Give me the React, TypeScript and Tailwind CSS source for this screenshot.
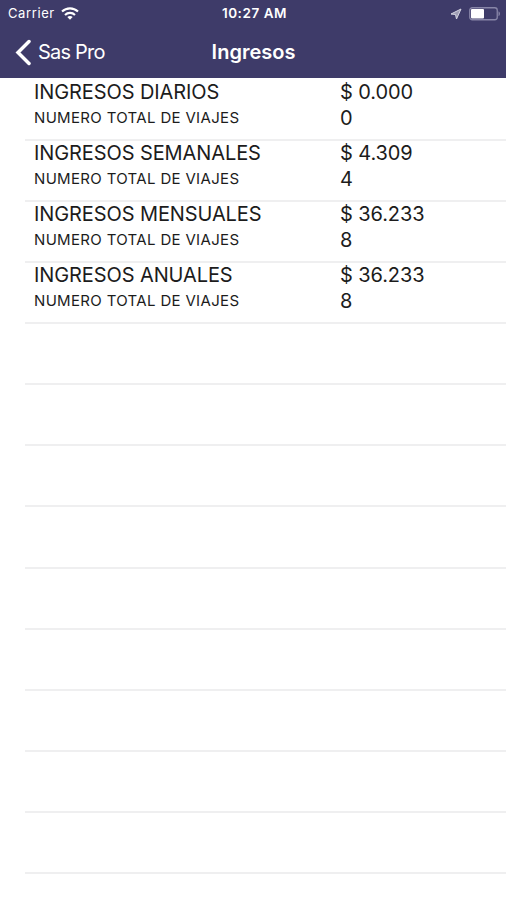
const font = "font-['Inter','Liberation_Sans',sans-serif]"

interface Income {
  label: string;
  amount: string;
  trips: number;
}

const incomes: Income[] = [
  { label: "INGRESOS DIARIOS", amount: "$ 0.000", trips: 0 },
  { label: "INGRESOS SEMANALES", amount: "$ 4.309", trips: 4 },
  { label: "INGRESOS MENSUALES", amount: "$ 36.233", trips: 8 },
  { label: "INGRESOS ANUALES", amount: "$ 36.233", trips: 8 },
]

function StatusBar() {
  return (
    <div className="grid h-[27px] grid-cols-3 items-center pl-2 pr-[5px] text-[13px]">
      <div className="flex items-center gap-[6px]">
        <span className="tracking-[0.6px]">Carrier</span>
        <svg width="18" height="13" viewBox="0 0 18 13" fill="none" stroke="currentColor" strokeWidth="2.1">
          <path d="M1 4.6C5.5.3 12.5.3 17 4.6" />
          <path d="M4 7.9C6.8 5.2 11.2 5.2 14 7.9" />
          <path d="M9 12.8L6.3 10.1C7.8 8.5 10.2 8.5 11.7 10.1Z" fill="currentColor" stroke="none" />
        </svg>
      </div>
      <div className="text-center text-[13.5px] font-semibold tracking-[0.55px] whitespace-nowrap">10:27 AM</div>
      <div className="flex items-center justify-end gap-[7px]">
        <svg width="12" height="12" viewBox="0 0 12 12" fill="none" stroke="#d5d4e2" strokeWidth="1">
          <path d="M11 1L1 6L5.5 6.5L6.5 11Z" fill="currentColor" fillOpacity=".5" />
        </svg>
        <svg width="32" height="14" viewBox="0 0 32 14">
          <rect x=".75" y=".75" width="27.5" height="12" rx="2.5" fill="none" stroke="#8886a8" strokeWidth="1.3" />
          <rect x="2" y="2" width="13" height="9.5" rx="1" fill="white" />
          <path d="M29.5 4.2C31.5 5.2 31.5 8.2 29.5 9.2Z" fill="#8886a8" />
        </svg>
      </div>
    </div>
  )
}

function NavBar() {
  return (
    <div className="grid h-[50px] grid-cols-3 items-center pl-[15px] pr-[14px]">
      <button className="flex items-center gap-[7px] text-xl">
        <svg
          width="16"
          height="27"
          viewBox="0 0 16 27"
          fill="none"
          stroke="currentColor"
          strokeWidth="3.5"
          strokeLinecap="round"
        >
          <path d="M14 2.5L3 13.5L14 24.5" />
        </svg>
        <span className="tracking-[-0.8px] whitespace-nowrap">Sas Pro</span>
      </button>
      <h1 className="text-center text-xl font-semibold">Ingresos</h1>
    </div>
  )
}

export default function App() {
  return (
    <div className={`h-[900px] w-[506px] overflow-hidden bg-white text-[#1c1c1c] ${font}`}>
      <header className="h-[78px] bg-[#3e3b69] text-white">
        <StatusBar />
        <NavBar />
      </header>
      <main className="ml-[25px]">
        {incomes.map((income, i) => (
          <section
            key={income.label}
            className={`grid grid-cols-[306px_1fr] border-b-2 border-[#efeff0] pl-[9px] ${i === 0 ? "h-[63px] pt-[2px]" : "h-[61px]"}`}
          >
            <div>
              <h2 className="h-[26px] text-xl leading-6 tracking-[-0.1px]">{income.label}</h2>
              <p className="text-[15px] leading-6 tracking-[0.33px]">NUMERO TOTAL DE VIAJES</p>
            </div>
            <div className="text-xl">
              <p className="h-[26px] leading-6 tracking-[-0.1px]">{income.amount}</p>
              <p className="leading-6">{income.trips}</p>
            </div>
          </section>
        ))}
        {Array.from({ length: 9 }).map((_, i) => (
          <div key={i} className="h-[61.15px] border-b-2 border-[#efeff0]" />
        ))}
      </main>
    </div>
  )
}
